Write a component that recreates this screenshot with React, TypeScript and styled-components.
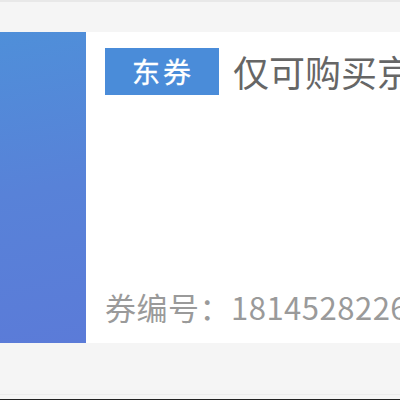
import React from "react";
import styled, { createGlobalStyle } from "styled-components";

const GlobalStyle = createGlobalStyle`
  html, body {
    margin: 0;
    padding: 0;
    background: #f5f5f5;
    font-family: "Noto Sans CJK SC", "Noto Sans", sans-serif;
  }
`;

const Page = styled.div`
  width: 400px;
  height: 400px;
  overflow: hidden;
  border-top: 2px solid #e8e8e8;
  box-sizing: border-box;
  display: flex;
  flex-direction: column;
`;

const Coupon = styled.div`
  margin-top: 30px;
  height: 311px;
  display: flex;
  flex-shrink: 0;
`;

const Side = styled.div`
  width: 86px;
  flex-shrink: 0;
  background: linear-gradient(170deg, #4f8fd9 0%, #5882d8 50%, #5b7bd8 100%);
`;

const Body = styled.div`
  flex: 1;
  background: #ffffff;
  padding: 16px 0 16px 19px;
  display: flex;
  flex-direction: column;
  justify-content: space-between;
  overflow: hidden;
  white-space: nowrap;
`;

const TitleRow = styled.div`
  display: flex;
  align-items: center;
  gap: 14px;
`;

const Tag = styled.span`
  height: 47px;
  padding: 0 25px 0 27px;
  background: #4a8cd9;
  color: #ffffff;
  font-size: 28px;
  line-height: 47px;
  letter-spacing: 3px;
  -webkit-text-stroke: 0.3px #ffffff;
`;

const Title = styled.span`
  color: #666666;
  font-size: 36px;
  line-height: 47px;
`;

const Code = styled.div`
  color: #9a9a9a;
  font-size: 31px;
  line-height: 40px;
  letter-spacing: 0.5px;
`;

const Footer = styled.div`
  margin-top: auto;
  height: 4px;
  border-top: 1px solid #ececec;
  border-bottom: 1px solid #222222;
`;

export default function App() {
  return (
    <>
      <GlobalStyle />
      <Page>
        <Coupon>
          <Side />
          <Body>
            <TitleRow>
              <Tag>东券</Tag>
              <Title>仅可购买京东自营商品</Title>
            </TitleRow>
            <Code>券编号：18145282263</Code>
          </Body>
        </Coupon>
        <Footer />
      </Page>
    </>
  );
}
